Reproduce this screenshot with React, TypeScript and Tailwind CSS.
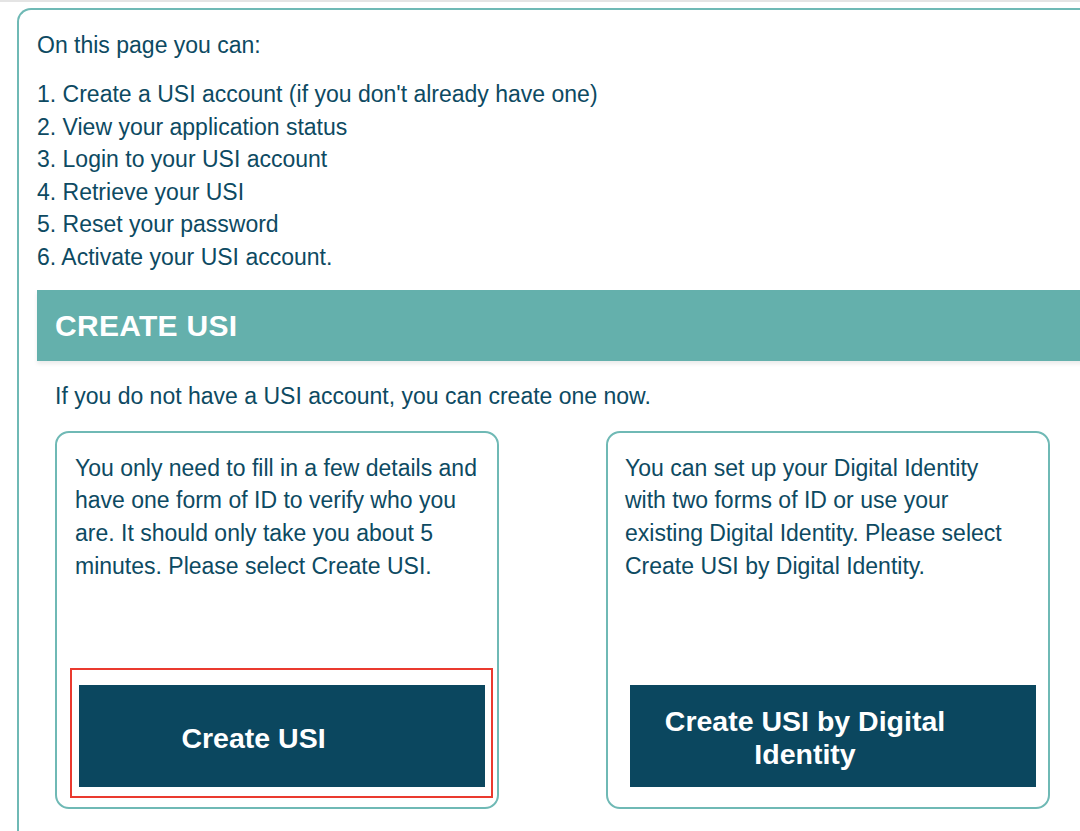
const body = "font-['Liberation_Sans',Arial,sans-serif] text-[#0d4a62]";

const tasks = [
  "Create a USI account (if you don't already have one)",
  "View your application status",
  "Login to your USI account",
  "Retrieve your USI",
  "Reset your password",
  "Activate your USI account.",
];

const ActionButton = ({ children }: { children: React.ReactNode }) => (
  <button className="flex h-[102px] w-[406px] items-center bg-[#0b475f] pl-[20px] pr-[76px] pt-[5px] text-center">
    <span className="w-full text-[28.5px] font-bold leading-[33px] text-white">{children}</span>
  </button>
);

export default function App() {
  return (
    <div className={`min-h-[831px] w-[1080px] overflow-hidden bg-white ${body}`}>
      <div className="h-[2px] bg-[#e4e4e4]" />
      <div className="ml-[17px] mt-[6px] w-[1100px] rounded-tl-[14px] border-l-2 border-t-2 border-[#6fb9b5] pb-10 pl-[18px] pt-[19px]">
        <p className="text-[23px] leading-[33px]">On this page you can:</p>

        {/* numbered tasks */}
        <ol className="mt-[16px] text-[23px] leading-[32.6px]">
          {tasks.map((t, i) => (
            <li key={t}>
              {i + 1}. {t}
            </li>
          ))}
        </ol>

        <div className="mt-[16px] flex h-[71px] items-center bg-[#64b0ac] pl-[18px] shadow-[0_3px_4px_rgba(0,0,0,0.08)]">
          <h2 className="text-[30px] font-bold tracking-[0.3px] text-white">CREATE USI</h2>
        </div>

        <div className="pl-[18px]">
          <p className="mt-[19px] text-[23px] leading-[33px]">
            If you do not have a USI account, you can create one now.
          </p>

          <div className="mt-[18px] flex gap-[107px]">
            {/* Create USI card */}
            <div className="flex h-[378px] w-[444px] flex-col rounded-[14px] border-2 border-[#6fb9b5]">
              <p className="ml-[18px] mt-[19px] text-[23px] leading-[32.7px]">
                You only need to fill in a few details and
                <br />
                have one form of ID to verify who you
                <br />
                are. It should only take you about 5
                <br />
                minutes. Please select Create USI.
              </p>
              <div className="mb-[9px] ml-[13px] mt-auto w-[423px] border-[2.5px] border-[#ea3a2f] pb-[9px] pl-[6.5px] pt-[14.5px]">
                <ActionButton>Create USI</ActionButton>
              </div>
            </div>

            {/* Digital identity card */}
            <div className="flex h-[378px] w-[444px] flex-col rounded-[14px] border-2 border-[#6fb9b5]">
              <p className="ml-[17px] mt-[19px] text-[23px] leading-[32.7px]">
                You can set up your Digital Identity
                <br />
                with two forms of ID or use your
                <br />
                existing Digital Identity. Please select
                <br />
                Create USI by Digital Identity.
              </p>
              <div className="mb-[20px] ml-[22px] mt-auto">
                <ActionButton>Create USI by Digital Identity</ActionButton>
              </div>
            </div>
          </div>
        </div>
      </div>
    </div>
  );
}
